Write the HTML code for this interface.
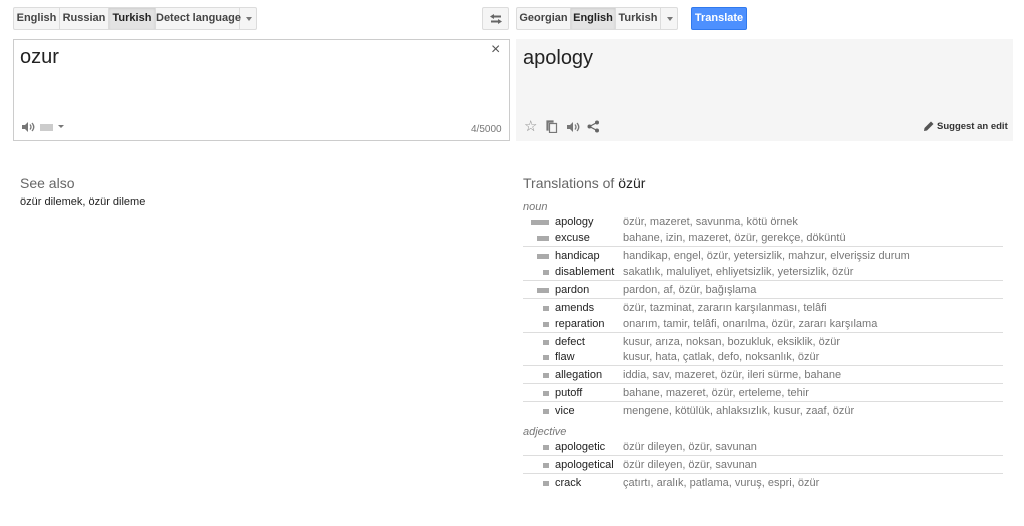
<!DOCTYPE html>
<html><head><meta charset="utf-8"><style>
*{margin:0;padding:0;box-sizing:border-box}
body{width:1024px;height:526px;background:#fff;font-family:"Liberation Sans",Arial,sans-serif;position:relative;overflow:hidden;color:#222}
.a{position:absolute}
.bar{position:absolute;top:7px;height:23px;display:flex;border:1px solid #dcdcdc;border-radius:2px;background:#f5f5f5}
.bar div{font-size:11px;font-weight:bold;color:#444;padding:0;text-align:center;white-space:nowrap;line-height:21px;border-right:1px solid #dcdcdc;height:21px;flex:none}
.bar div:last-child{border-right:none}
.bar .on{background:#e3e3e3;color:#222;box-shadow:inset 0 1px 2px rgba(0,0,0,.1)}
.dd{width:18px;position:relative}
.dd:after{content:"";position:absolute;left:6px;top:9px;border:3px solid transparent;border-top:4px solid #777}
.row{position:absolute;left:523px;width:480px;height:16px;font-size:11px}
.row .b{position:absolute;top:6px;height:5px;background:#aaa}
.row .w{position:absolute;left:32px;top:2px;color:#222}
.row .t{position:absolute;left:100px;top:2px;color:#777}
.sep{position:absolute;left:523px;width:480px;height:1px;background:#ddd}
.pos{position:absolute;left:523px;font-size:11px;font-style:italic;color:#777}
</style></head><body>
<div class="bar" style="left:13px;width:244px"><div style="width:46px">English</div><div style="width:49px">Russian</div><div class="on" style="width:47px">Turkish</div><div style="width:84px">Detect language</div><div class="dd"></div></div>
<div class="bar" style="left:482px;width:27px;justify-content:center"><svg width="14" height="12" viewBox="0 0 14 12" style="margin-top:5px"><path d="M5 1L1 3.5 5 6V4.5h7v-2H5z M9 6l4 2.5L9 11V9.5H2v-2h7z" fill="#666"/></svg></div>
<div class="bar" style="left:516px;width:162px"><div style="width:54px">Georgian</div><div class="on" style="width:45px">English</div><div style="width:45px">Turkish</div><div class="dd"></div></div>
<div class="a" style="left:691px;top:7px;width:56px;height:23px;background:#4d90fe;border:1px solid #3079ed;border-radius:2px;color:#fff;font-size:11px;font-weight:bold;text-align:center;line-height:21px">Translate</div>

<div class="a" style="left:13px;top:39px;width:497px;height:102px;border:1px solid #ccc"></div>
<div class="a" style="left:20px;top:46px;font-size:20px;color:#222">ozur</div>
<div class="a" style="left:491px;top:41px;font-size:16px;color:#555">×</div>
<svg class="a" style="left:21px;top:121px" width="14" height="12" viewBox="0 0 14 12"><path d="M1 4h3l3-3v10L4 8H1z" fill="#777"/><path d="M9 3.5q2 2.5 0 5M11 2q3.5 4 0 8" stroke="#777" fill="none" stroke-width="1.3"/></svg>
<div class="a" style="left:40px;top:124px;width:13px;height:7px;background:#ccc"></div>
<div class="a" style="left:58px;top:125px;border:3px solid transparent;border-top:3px solid #777"></div>
<div class="a" style="left:471px;top:124px;font-size:10px;color:#777">4/5000</div>

<div class="a" style="left:516px;top:39px;width:497px;height:102px;background:#f5f5f5"></div>
<div class="a" style="left:523px;top:47px;font-size:20px;color:#222">apology</div>
<div class="a" style="left:524px;top:117px;font-size:15px;color:#888">☆</div>
<svg class="a" style="left:546px;top:120px" width="12" height="13" viewBox="0 0 12 13"><path d="M1 1h6v1H2v8H1z M3.5 3.5h7v9h-7z" fill="none" stroke="#777" stroke-width="1.2"/></svg>
<svg class="a" style="left:566px;top:121px" width="14" height="12" viewBox="0 0 14 12"><path d="M1 4h3l3-3v10L4 8H1z" fill="#777"/><path d="M9 3.5q2 2.5 0 5M11 2q3.5 4 0 8" stroke="#777" fill="none" stroke-width="1.3"/></svg>
<svg class="a" style="left:587px;top:120px" width="13" height="13" viewBox="0 0 13 13"><circle cx="10" cy="2.5" r="2" fill="#666"/><circle cx="2.5" cy="6.5" r="2" fill="#666"/><circle cx="10" cy="10.5" r="2" fill="#666"/><path d="M10 2.5L2.5 6.5 10 10.5" stroke="#666" fill="none" stroke-width="1.2"/></svg>
<svg class="a" style="left:923px;top:120px" width="12" height="12" viewBox="0 0 12 12"><path d="M1 11l.5-3L8 1.5l2.5 2.5L4 10.5z" fill="#555"/></svg>
<div class="a" style="left:937px;top:121px;font-size:9.5px;font-weight:bold;color:#333;white-space:nowrap">Suggest an edit</div>

<div class="a" style="left:20px;top:175px;font-size:14px;color:#666">See also</div>
<div class="a" style="left:20px;top:196px;font-size:11px;color:#222">özür dilemek, özür dileme</div>

<div class="a" style="left:523px;top:175px;font-size:14px;color:#666">Translations of <span style="color:#222">özür</span></div>
<div class="pos" style="top:201px">noun</div>

<div class="row" style="top:214px"><div class="b" style="left:8px;width:18px"></div><div class="w">apology</div><div class="t">özür, mazeret, savunma, kötü örnek</div></div>
<div class="row" style="top:230px"><div class="b" style="left:14px;width:12px"></div><div class="w">excuse</div><div class="t">bahane, izin, mazeret, özür, gerekçe, döküntü</div></div>
<div class="sep" style="top:246px"></div>
<div class="row" style="top:248px"><div class="b" style="left:14px;width:12px"></div><div class="w">handicap</div><div class="t">handikap, engel, özür, yetersizlik, mahzur, elverişsiz durum</div></div>
<div class="row" style="top:264px"><div class="b" style="left:20px;width:6px"></div><div class="w">disablement</div><div class="t">sakatlık, maluliyet, ehliyetsizlik, yetersizlik, özür</div></div>
<div class="sep" style="top:280px"></div>
<div class="row" style="top:282px"><div class="b" style="left:14px;width:12px"></div><div class="w">pardon</div><div class="t">pardon, af, özür, bağışlama</div></div>
<div class="sep" style="top:298px"></div>
<div class="row" style="top:300px"><div class="b" style="left:20px;width:6px"></div><div class="w">amends</div><div class="t">özür, tazminat, zararın karşılanması, telâfi</div></div>
<div class="row" style="top:316px"><div class="b" style="left:20px;width:6px"></div><div class="w">reparation</div><div class="t">onarım, tamir, telâfi, onarılma, özür, zararı karşılama</div></div>
<div class="sep" style="top:332px"></div>
<div class="row" style="top:334px"><div class="b" style="left:20px;width:6px"></div><div class="w">defect</div><div class="t">kusur, arıza, noksan, bozukluk, eksiklik, özür</div></div>
<div class="row" style="top:349px"><div class="b" style="left:20px;width:6px"></div><div class="w">flaw</div><div class="t">kusur, hata, çatlak, defo, noksanlık, özür</div></div>
<div class="sep" style="top:365px"></div>
<div class="row" style="top:367px"><div class="b" style="left:20px;width:6px"></div><div class="w">allegation</div><div class="t">iddia, sav, mazeret, özür, ileri sürme, bahane</div></div>
<div class="sep" style="top:383px"></div>
<div class="row" style="top:385px"><div class="b" style="left:20px;width:6px"></div><div class="w">putoff</div><div class="t">bahane, mazeret, özür, erteleme, tehir</div></div>
<div class="sep" style="top:401px"></div>
<div class="row" style="top:403px"><div class="b" style="left:20px;width:6px"></div><div class="w">vice</div><div class="t">mengene, kötülük, ahlaksızlık, kusur, zaaf, özür</div></div>
<div class="pos" style="top:426px">adjective</div>
<div class="row" style="top:439px"><div class="b" style="left:20px;width:6px"></div><div class="w">apologetic</div><div class="t">özür dileyen, özür, savunan</div></div>
<div class="sep" style="top:455px"></div>
<div class="row" style="top:457px"><div class="b" style="left:20px;width:6px"></div><div class="w">apologetical</div><div class="t">özür dileyen, özür, savunan</div></div>
<div class="sep" style="top:473px"></div>
<div class="row" style="top:475px"><div class="b" style="left:20px;width:6px"></div><div class="w">crack</div><div class="t">çatırtı, aralık, patlama, vuruş, espri, özür</div></div>
</body></html>
